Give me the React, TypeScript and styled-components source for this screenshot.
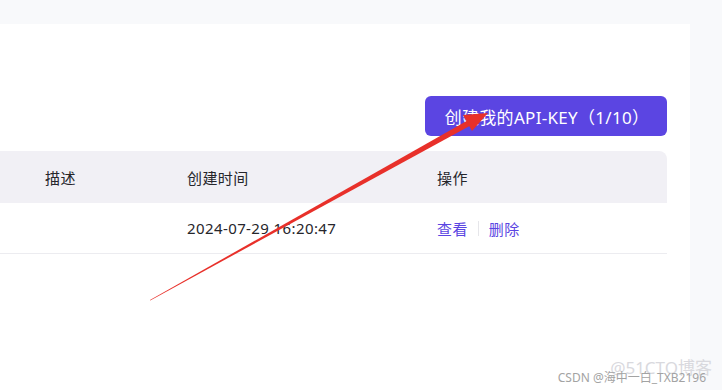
import React from 'react';
import styled, { createGlobalStyle } from 'styled-components';

const GlobalStyle = createGlobalStyle`
  html, body {
    margin: 0;
    padding: 0;
    background: #f8f9fb;
  }
  body {
    font-family: "Noto Sans", "Noto Sans CJK SC", sans-serif;
  }
`;

const Page = styled.div`
  position: relative;
  width: 722px;
  height: 390px;
  padding-top: 24px;
  box-sizing: border-box;
  overflow: hidden;
  background: #f8f9fb;
`;

const Panel = styled.div`
  width: 690px;
  height: 366px;
  background: #ffffff;
  padding: 72px 23px 0 0;
  box-sizing: border-box;
`;

const Toolbar = styled.div`
  display: flex;
  justify-content: flex-end;
  margin-bottom: 15px;
`;

const PrimaryButton = styled.button`
  height: 40px;
  width: 242px;
  border: none;
  border-radius: 6px;
  background: #5b45e2;
  color: #ffffff;
  font-family: "Noto Sans", "Noto Sans CJK SC", sans-serif;
  font-size: 17px;
  letter-spacing: 0.3px;
  padding: 0 0 0 2px;
  cursor: pointer;
`;

const Table = styled.div`
  width: 667px;
`;

const Row = styled.div<{ $head?: boolean }>`
  display: grid;
  grid-template-columns: 45px 142px 250px 1fr;
  align-items: center;
  height: ${(p) => (p.$head ? '52px' : '50px')};
  background: ${(p) => (p.$head ? '#f1f0f5' : '#ffffff')};
  border-radius: ${(p) => (p.$head ? '0 8px 0 0' : '0')};
  border-bottom: ${(p) => (p.$head ? 'none' : '1px solid #ececf0')};
  font-size: 15px;
  letter-spacing: 0.4px;
  color: #26262b;
`;

const Cell = styled.div`
  white-space: nowrap;
`;

const Actions = styled.div`
  display: flex;
  align-items: center;
`;

const LinkText = styled.span`
  color: #5b45e2;
  cursor: pointer;
`;

const Divider = styled.span`
  width: 1px;
  height: 15px;
  background: #e6e6ea;
  margin: 0 10px;
`;

const Arrow = styled.svg`
  position: absolute;
  left: 0;
  top: 0;
  pointer-events: none;
`;

const Watermark = styled.div`
  position: absolute;
  right: 16px;
  bottom: 4px;
  font-size: 12px;
  color: #a3a3a3;
  font-family: "Noto Sans", "Noto Sans CJK SC", sans-serif;
`;

const WatermarkFaint = styled.div`
  position: absolute;
  right: 10px;
  bottom: 11px;
  font-size: 17px;
  color: #d9d9de;
  font-family: "Noto Sans", "Noto Sans CJK SC", sans-serif;
`;

export default function App() {
  return (
    <>
      <GlobalStyle />
      <Page>
        <Panel>
          <Toolbar>
            <PrimaryButton>创建我的API-KEY（1/10）</PrimaryButton>
          </Toolbar>
          <Table>
            <Row $head>
              <Cell />
              <Cell>描述</Cell>
              <Cell>创建时间</Cell>
              <Cell>操作</Cell>
            </Row>
            <Row>
              <Cell />
              <Cell />
              <Cell>2024-07-29 16:20:47</Cell>
              <Actions>
                <LinkText>查看</LinkText>
                <Divider />
                <LinkText>删除</LinkText>
              </Actions>
            </Row>
          </Table>
        </Panel>
        <WatermarkFaint>@51CTO博客</WatermarkFaint>
        <Watermark>CSDN @海中一白_TXB2196</Watermark>
        <Arrow width="722" height="390" viewBox="0 0 722 390">
          <polygon
            points="150,300 150.3,300.5 470.5,125.4 467.5,120.4"
            fill="#e8302a"
          />
          <polygon points="488,113 472,131 463,115" fill="#e8302a" />
        </Arrow>
      </Page>
    </>
  );
}
